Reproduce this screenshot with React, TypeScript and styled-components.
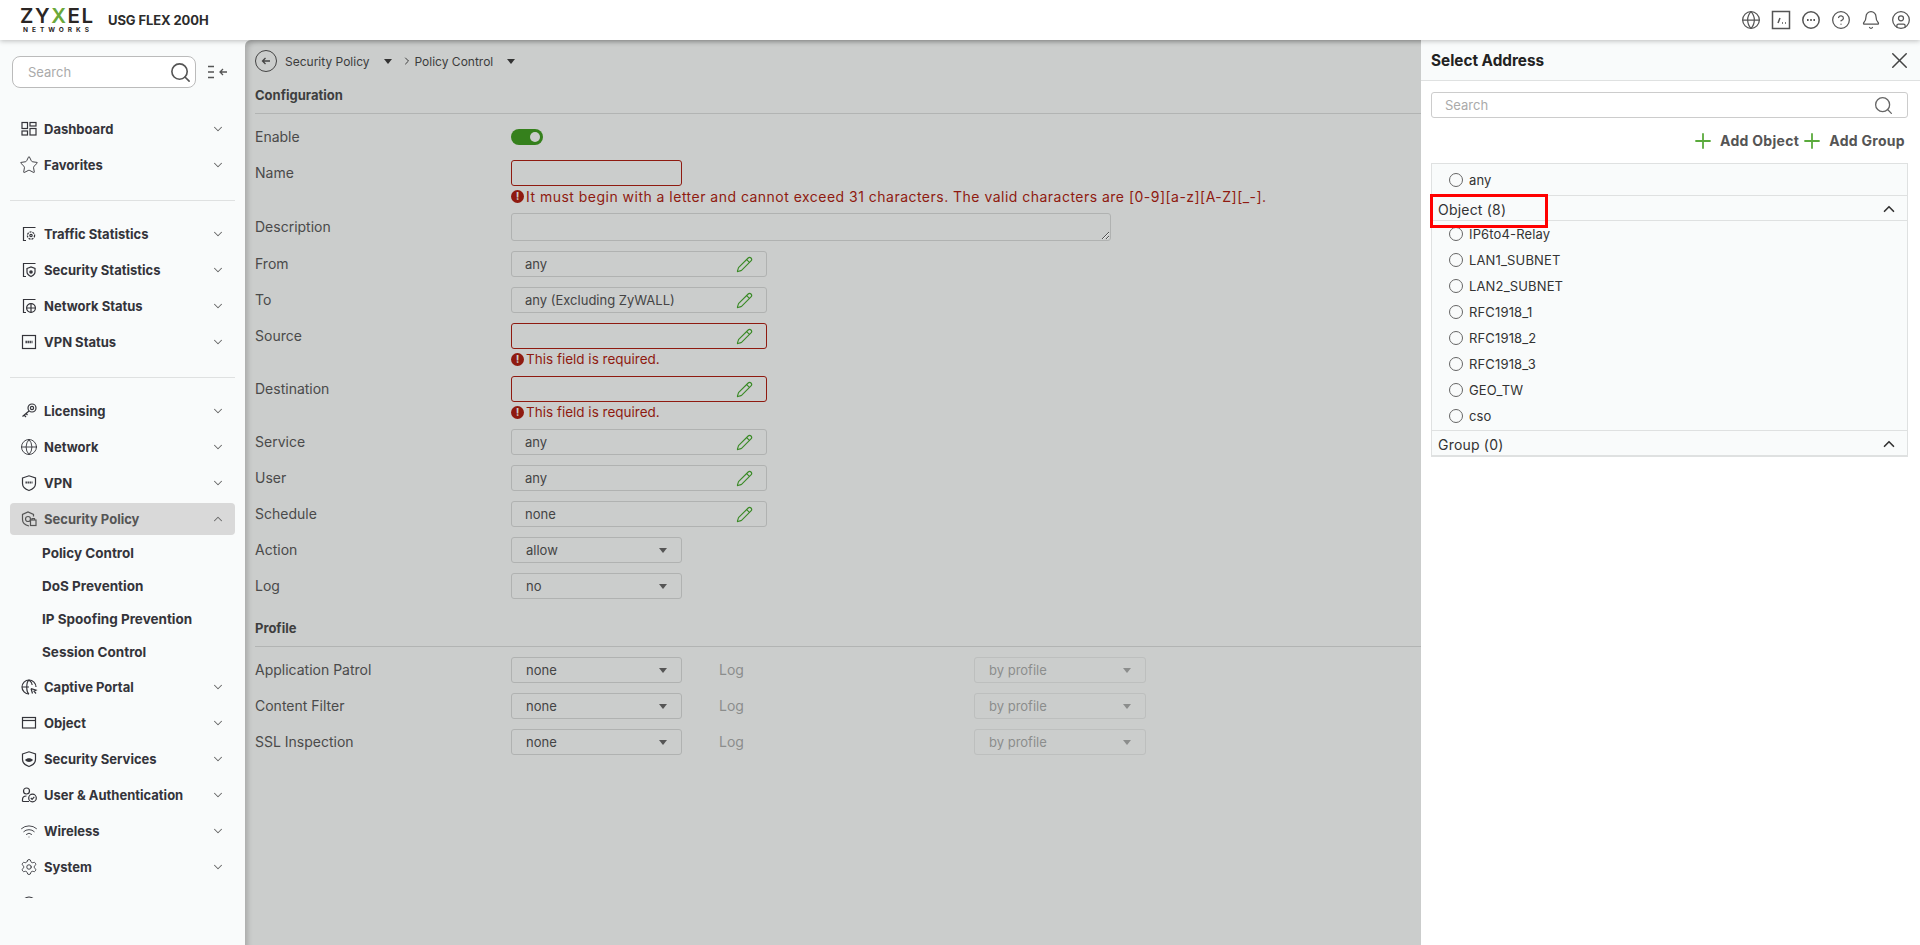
import React from 'react'
import styled, { createGlobalStyle } from 'styled-components'
import {
  Bell,
  ChevronDown,
  ChevronRight,
  ChevronUp,
  CircleHelp,
  CircleUser,
  Globe,
  Pencil,
  Plus,
  Search,
  Settings,
  Star,
  Wifi,
  X,
} from 'lucide-react'

const font = `'Inter', 'Liberation Sans', sans-serif`

const GlobalStyle = createGlobalStyle`
  html, body { margin: 0; height: 100%; }
  body { font-family: ${font}; color: #333; background: #f9fbfb; overflow: hidden; }
  * { box-sizing: border-box; }
`

const Page = styled.div`
  display: flex;
  flex-direction: column;
  height: 945px;
`

const TopBar = styled.header`
  display: flex;
  align-items: center;
  height: 40px;
  padding: 0 9px 0 20px;
  background: #fff;
  box-shadow: 0 1px 5px rgba(0, 0, 0, 0.25);
  position: relative;
  z-index: 2;
`

const Logo = styled.div`
  width: 88px;
  display: flex;
  flex-direction: column;
  color: #2b2624;
`

const LogoWord = styled.div`
  font-size: 20.5px;
  line-height: 20px;
  font-weight: 600;
  letter-spacing: 1.6px;
  height: 20px;
  span { color: #6aa83a; }
`

const LogoSub = styled.div`
  font-size: 6.5px;
  line-height: 8px;
  font-weight: 700;
  letter-spacing: 4px;
  padding-left: 3px;
`

const Model = styled.div`
  font-size: 13px;
  font-weight: 700;
  letter-spacing: -0.1px;
  color: #2c2c2c;
  flex: 1;
`

const TopIcons = styled.div`
  display: flex;
  align-items: center;
  gap: 10px;
  color: #555;
  svg { display: block; width: 20px; height: 20px; }
`

const Body = styled.div`
  flex: 1;
  display: flex;
  min-height: 0;
`

const Sidebar = styled.aside`
  width: 245px;
  flex-shrink: 0;
  display: flex;
  flex-direction: column;
  padding: 16px 10px 0;
  background: #f9fbfb;
`

const SearchRow = styled.div`
  display: flex;
  align-items: center;
  gap: 12px;
  margin: 0 0 25px 2px;
`

const SideSearch = styled.div`
  width: 184px;
  height: 32px;
  display: flex;
  align-items: center;
  justify-content: space-between;
  padding: 0 3px 0 15px;
  border: 1px solid #bbb;
  border-radius: 8px;
  background: #fff;
  font-size: 13px;
  color: #aaa;
  svg { color: #555; }
`

const Nav = styled.nav`
  height: 785px;
  overflow: hidden;
  display: flex;
  flex-direction: column;
`

const NavRow = styled.div<{ $active?: boolean }>`
  flex-shrink: 0;
  height: 32px;
  margin-bottom: 4px;
  display: flex;
  align-items: center;
  gap: 6px;
  padding: 0 10px 0 10px;
  border-radius: 4px;
  font-size: 13px;
  font-weight: 700;
  color: ${(p) => (p.$active ? '#555' : '#34343a')};
  background: ${(p) => (p.$active ? '#d9d9d9' : 'transparent')};
`

const IconSlot = styled.span`
  width: 18px;
  height: 20px;
  display: flex;
  align-items: center;
  justify-content: center;
  svg { flex-shrink: 0; }
`

const NavLabel = styled.span`
  flex: 1;
`

const NavChevron = styled.span`
  display: flex;
  color: #666;
`

const NavDivider = styled.hr`
  flex-shrink: 0;
  width: 100%;
  margin: 15px 0 17px;
  border: 0;
  border-top: 1px solid #dfe1e1;
`

const SubList = styled.div`
  flex-shrink: 0;
  margin: -2px 0 2px;
  display: flex;
  flex-direction: column;
`

const SubItem = styled.div`
  height: 33px;
  line-height: 33px;
  padding-left: 32px;
  font-size: 13.5px;
  font-weight: 700;
  color: #34343a;
`

const Main = styled.main`
  flex: 1;
  min-width: 0;
  padding: 10px 0 0 10px;
  background: #cbcdcc;
  border-top-left-radius: 6px;
  box-shadow: inset 5px 4px 5px -2px rgba(0, 0, 0, 0.16);
  color: #444;
  font-size: 13px;
`

const Crumbs = styled.div`
  display: flex;
  align-items: center;
  height: 22px;
  font-size: 12px;
  color: #3c3c3c;
`

const BackCircle = styled.span`
  width: 22px;
  height: 22px;
  border: 1px solid #444;
  border-radius: 50%;
  display: flex;
  align-items: center;
  justify-content: center;
  margin-right: 8px;
`

const CrumbArrow = styled.span`
  display: flex;
  margin: 0 2px 0 9px;
`

const Caret = styled.span<{ $color?: string; $left?: number }>`
  width: 0;
  height: 0;
  margin-left: ${(p) => p.$left ?? 0}px;
  border-left: 4px solid transparent;
  border-right: 4px solid transparent;
  border-top: 5px solid ${(p) => p.$color ?? '#333'};
`

const SectionHead = styled.div<{ $top: number }>`
  margin: ${(p) => p.$top}px 0 10px;
  height: 30px;
  line-height: 23px;
  padding-bottom: 5px;
  border-bottom: 1px solid #b2b4b3;
  font-weight: 700;
  font-size: 13px;
  color: #3e3e3e;
`

const FormRow = styled.div`
  display: grid;
  grid-template-columns: 256px 1fr;
  margin-bottom: 10px;
`

const Label = styled.div<{ $disabled?: boolean; $tall?: boolean }>`
  line-height: ${(p) => (p.$tall ? 28 : 26)}px;
  font-size: 14px;
  color: ${(p) => (p.$disabled ? '#8b8d8c' : '#4a4a4a')};
`

const Toggle = styled.span`
  display: block;
  width: 32px;
  height: 16px;
  margin: 5px 0;
  border-radius: 8px;
  background: #35801c;
  position: relative;
  &::after {
    content: '';
    position: absolute;
    right: 3px;
    top: 3px;
    width: 10px;
    height: 10px;
    border-radius: 50%;
    background: #cbcdcc;
  }
`

const NameInput = styled.input`
  display: block;
  width: 171px;
  height: 26px;
  background: transparent;
  border: 1px solid #8f1a10;
  border-radius: 3px;
  outline: none;
`

const DescArea = styled.textarea`
  display: block;
  width: 600px;
  height: 28px;
  background: transparent;
  border: 1px solid #b0b2b1;
  border-radius: 3px;
  outline: none;
  resize: vertical;
`

const PickField = styled.div<{ $error?: boolean }>`
  width: 256px;
  height: 26px;
  display: flex;
  align-items: center;
  justify-content: space-between;
  padding: 0 13px;
  border: 1px solid ${(p) => (p.$error ? '#8f1a10' : '#b0b2b1')};
  border-radius: 3px;
  color: #444;
  svg { color: #3a8a26; }
`

const ErrorLine = styled.div<{ $long?: boolean }>`
  height: 17px;
  padding-top: 3px;
  display: flex;
  align-items: center;
  gap: 2px;
  font-size: ${(p) => (p.$long ? 14 : 13.5)}px;
  letter-spacing: ${(p) => (p.$long ? 0.48 : 0)}px;
  color: #8f1a10;
  white-space: nowrap;
`

const ErrorDot = styled.span`
  width: 13px;
  height: 13px;
  border-radius: 50%;
  background: #8f1a10;
  color: #cbcdcc;
  font-size: 11px;
  line-height: 13px;
  letter-spacing: 0;
  font-weight: 700;
  text-align: center;
  flex-shrink: 0;
`

const SelectBox = styled.div<{ $disabled?: boolean }>`
  width: ${(p) => (p.$disabled ? 172 : 171)}px;
  height: 26px;
  display: flex;
  align-items: center;
  justify-content: space-between;
  padding: 0 14px;
  border: 1px solid ${(p) => (p.$disabled ? '#bdbfbe' : '#b0b2b1')};
  border-radius: 3px;
  color: ${(p) => (p.$disabled ? '#8b8d8c' : '#444')};
`

const ProfileRow = styled.div`
  display: grid;
  grid-template-columns: 256px 208px 255px 172px;
  margin-bottom: 10px;
`

const Drawer = styled.section`
  width: 499px;
  flex-shrink: 0;
  display: flex;
  flex-direction: column;
  background: #fff;
`

const DrawerHead = styled.div`
  height: 41px;
  flex-shrink: 0;
  display: flex;
  align-items: center;
  justify-content: space-between;
  padding: 1px 7px 0 10px;
  background: #f9fbfb;
  border-bottom: 1px solid #dfe1e1;
  font-size: 15.3px;
  font-weight: 700;
  color: #222;
  svg { color: #444; }
`

const DrawerSearch = styled.div`
  height: 26px;
  margin: 11px 12px 0 10px;
  display: flex;
  align-items: center;
  justify-content: space-between;
  padding: 0 13px;
  border: 1px solid #ccc;
  border-radius: 3px;
  font-size: 13px;
  color: #aaa;
  svg { color: #666; }
`

const AddBar = styled.div`
  display: flex;
  justify-content: flex-end;
  align-items: center;
  height: 45px;
  padding-right: 15px;
  font-size: 14px;
  letter-spacing: 0.3px;
  font-weight: 700;
  color: #555;
`

const AddLink = styled.span`
  display: flex;
  align-items: center;
  gap: 5px;
  margin-left: 1px;
  svg { color: #5aaa3c; }
`

const ListBox = styled.div`
  margin: 0 12px 0 10px;
  border: 1px solid #dfe1e1;
  border-bottom-width: 2px;
  background: #f9fbfb;
  font-size: 13px;
  letter-spacing: 0.15px;
  color: #333;
`

const RadioRow = styled.div<{ $height: number }>`
  height: ${(p) => p.$height}px;
  display: flex;
  align-items: center;
  gap: 6px;
  padding-left: 17px;
`

const Radio = styled.span`
  width: 14px;
  height: 14px;
  border: 1.5px solid #666;
  border-radius: 50%;
  flex-shrink: 0;
`

const GroupHead = styled.div`
  position: relative;
  height: 25px;
  display: flex;
  align-items: center;
  justify-content: space-between;
  padding: 2px 9px 0 6px;
  border-top: 1px solid #dfe1e1;
  font-size: 14px;
  letter-spacing: 0.2px;
  svg { color: #333; }
`

const GroupItems = styled.div`
  border-top: 1px solid #dfe1e1;
  height: 210px;
  overflow: hidden;
`

const Marker = styled.span`
  position: absolute;
  left: -2px;
  top: -2px;
  width: 118px;
  height: 34px;
  border: 3px solid #f00;
  z-index: 1;
`

const icon = {
  width: 18,
  height: 18,
  viewBox: '0 0 18 18',
  fill: 'none',
  stroke: 'currentColor',
  strokeWidth: 1.2,
}

const Tiles = () => (
  <svg {...icon}>
    <rect x="2" y="2.5" width="5.5" height="6" />
    <rect x="10" y="2.5" width="6" height="3.5" />
    <rect x="2" y="11" width="5.5" height="4" />
    <rect x="10" y="8.5" width="6" height="6.5" />
  </svg>
)

const StatFrame: React.FC<{ children: React.ReactNode }> = ({ children }) => (
  <svg {...icon}>
    <path d="M15.5 2.5H3.5v13H6" />
    {children}
  </svg>
)

const Gear = () => (
  <StatFrame>
    <circle cx="11" cy="10.5" r="3.6" strokeDasharray="2 1" />
    <circle cx="11" cy="10.5" r="1.2" />
  </StatFrame>
)

const ShieldStat = () => (
  <StatFrame>
    <path d="M7 7.5l4-1.5 4 1.5v3.5c0 2-2 3.5-4 4.5-2-1-4-2.5-4-4.5z" />
    <circle cx="11" cy="11" r="1.8" fill="currentColor" stroke="none" />
  </StatFrame>
)

const GlobeStat = () => (
  <StatFrame>
    <circle cx="11" cy="11" r="4.4" />
    <path d="M6.6 11h8.8M11 6.6v8.8" />
  </StatFrame>
)

const VpnBox = () => (
  <svg {...icon}>
    <rect x="2.5" y="2.5" width="13" height="13" />
    <path d="M5.5 9h7" strokeWidth="2.4" strokeDasharray="1.4 .6" />
  </svg>
)

const KeyBadge = () => (
  <svg {...icon}>
    <circle cx="12" cy="6" r="4" />
    <circle cx="12" cy="6" r="1.6" />
    <path d="M9 9l-6.5 5.5M4 13l2 2M6 11.5l1.5 1.5" />
  </svg>
)

const ShieldVpn = () => (
  <svg {...icon}>
    <path d="M2.5 4L9 1.8 15.5 4v5.5c0 3.4-3 5.8-6.5 7-3.5-1.2-6.5-3.6-6.5-7z" />
    <path d="M5.5 8.5h7" strokeWidth="2" strokeDasharray="1.4 .6" />
  </svg>
)

const ShieldLock = () => (
  <svg {...icon}>
    <path d="M9 16C5 15 2.5 12.5 2.5 9.5V4.5L8 2l5.5 2.500v2" />
    <circle cx="8" cy="9" r="2.5" />
    <rect x="10.5" y="10" width="5.5" height="5.5" />
    <path d="M12 10V8.5h2.500V10" />
  </svg>
)

const GlobeCursor = () => (
  <svg {...icon}>
    <path d="M9 16A7 7 0 1 1 16 9" />
    <path d="M2 9h7M9 2c-3 2-3 12 0 14M9 2c2 1.500 3 3.500 3.200 5" />
    <path d="M11 10.500l5 1.700-2 1 2 2.300M11 10.500l1.500 5" />
  </svg>
)

const Card = () => (
  <svg {...icon}>
    <rect x="2.5" y="3.5" width="13" height="10.5" />
    <path d="M2.5 6.5h13" />
  </svg>
)

const ShieldEye = () => (
  <svg {...icon}>
    <path d="M2.5 4L9 1.800 15.500 4v5.500c0 3.400-3 5.800-6.500 7-3.500-1.200-6.500-3.600-6.500-7z" />
    <path d="M5 10c2-2.500 6-2.500 8 0-2 2.500-6 2.500-8 0z" fill="currentColor" stroke="none" />
  </svg>
)

const UserCheck = () => (
  <svg {...icon}>
    <circle cx="6.5" cy="5" r="3" />
    <path d="M2.5 15.500v-2c0-2 1.500-3.500 4-3.500M2.500 15.500H9" />
    <circle cx="12.5" cy="12" r="3.8" />
    <path d="M10.800 12l1.300 1.300 2.200-2.400" />
  </svg>
)

const LogBadge = () => (
  <svg {...icon}>
    <path d="M3 9c0-8 12-8 12 0v7H3z" />
  </svg>
)

const Collapse = () => (
  <svg width="20" height="14" viewBox="0 0 20 14" fill="none" stroke="#555" strokeWidth="1.3">
    <path d="M0 1.500h6M0 7h6M0 12.500h6" />
    <path d="M19 7h-7M15 4l-3 3 3 3" />
  </svg>
)

const Analytics = () => (
  <svg viewBox="0 0 20 20" fill="none" stroke="currentColor" strokeWidth="1.5">
    <rect x="1.5" y="1.5" width="17" height="17" />
    <path d="M7 13l2-5M11 13h1M14 13h1" />
  </svg>
)

const Ellipsis = () => (
  <svg viewBox="0 0 20 20" fill="none" stroke="currentColor" strokeWidth="1.5">
    <circle cx="10" cy="10" r="8.2" />
    <path d="M6 10h1.600M9.200 10h1.600M12.400 10h1.600" strokeWidth="1.800" />
  </svg>
)

const Chevron: React.FC<{ up?: boolean }> = ({ up }) =>
  up ? <ChevronUp size={14} strokeWidth={1.8} /> : <ChevronDown size={14} strokeWidth={1.8} />

const groupA = [
  { label: 'Dashboard', icon: <Tiles /> },
  { label: 'Favorites', icon: <Star size={20} strokeWidth={1.1} /> },
]
const groupB = [
  { label: 'Traffic Statistics', icon: <Gear /> },
  { label: 'Security Statistics', icon: <ShieldStat /> },
  { label: 'Network Status', icon: <GlobeStat /> },
  { label: 'VPN Status', icon: <VpnBox /> },
]
const groupC = [
  { label: 'Licensing', icon: <KeyBadge /> },
  { label: 'Network', icon: <Globe size={18} strokeWidth={1.2} /> },
  { label: 'VPN', icon: <ShieldVpn /> },
]
const groupD = [
  { label: 'Captive Portal', icon: <GlobeCursor /> },
  { label: 'Object', icon: <Card /> },
  { label: 'Security Services', icon: <ShieldEye /> },
  { label: 'User & Authentication', icon: <UserCheck /> },
  { label: 'Wireless', icon: <Wifi size={18} strokeWidth={1.2} /> },
  { label: 'System', icon: <Settings size={18} strokeWidth={1.2} /> },
  { label: 'Log & Report', icon: <LogBadge /> },
]

const subItems = ['Policy Control', 'DoS Prevention', 'IP Spoofing Prevention', 'Session Control']
const objects = ['IP6to4-Relay', 'LAN1_SUBNET', 'LAN2_SUBNET', 'RFC1918_1', 'RFC1918_2', 'RFC1918_3', 'GEO_TW', 'cso']

const NavItem: React.FC<{ label: string; icon: React.ReactNode; active?: boolean }> = ({ label, icon: glyph, active }) => (
  <NavRow $active={active}>
    <IconSlot>{glyph}</IconSlot>
    <NavLabel>{label}</NavLabel>
    <NavChevron>
      <Chevron up={active} />
    </NavChevron>
  </NavRow>
)

const Pick: React.FC<{ label: string; value?: string; error?: boolean }> = ({ label, value, error }) => (
  <FormRow>
    <Label>{label}</Label>
    <div>
      <PickField $error={error}>
        <span>{value}</span>
        <Pencil size={17} strokeWidth={1.6} />
      </PickField>
      {error && (
        <ErrorLine>
          <ErrorDot>!</ErrorDot>This field is required.
        </ErrorLine>
      )}
    </div>
  </FormRow>
)

const Select: React.FC<{ value: string; disabled?: boolean }> = ({ value, disabled }) => (
  <SelectBox $disabled={disabled}>
    <span>{value}</span>
    <Caret $color={disabled ? '#8b8d8c' : '#555'} />
  </SelectBox>
)

const App: React.FC = () => (
  <Page>
    <GlobalStyle />
    <TopBar>
      <Logo>
        <LogoWord>
          ZY<span>X</span>EL
        </LogoWord>
        <LogoSub>NETWORKS</LogoSub>
      </Logo>
      <Model>USG FLEX 200H</Model>
      <TopIcons>
        <Globe strokeWidth={1.5} />
        <Analytics />
        <Ellipsis />
        <CircleHelp strokeWidth={1.5} />
        <Bell strokeWidth={1.5} />
        <CircleUser strokeWidth={1.5} />
      </TopIcons>
    </TopBar>
    <Body>
      <Sidebar>
        <SearchRow>
          <SideSearch>
            Search
            <Search size={23} strokeWidth={1.7} />
          </SideSearch>
          <Collapse />
        </SearchRow>
        <Nav>
          {groupA.map((g) => (
            <NavItem key={g.label} {...g} />
          ))}
          <NavDivider />
          {groupB.map((g) => (
            <NavItem key={g.label} {...g} />
          ))}
          <NavDivider />
          {groupC.map((g) => (
            <NavItem key={g.label} {...g} />
          ))}
          <NavItem label="Security Policy" icon={<ShieldLock />} active />
          <SubList>
            {subItems.map((s) => (
              <SubItem key={s}>{s}</SubItem>
            ))}
          </SubList>
          {groupD.map((g) => (
            <NavItem key={g.label} {...g} />
          ))}
        </Nav>
      </Sidebar>
      <Main>
        <Crumbs>
          <BackCircle>
            <svg width="12" height="12" viewBox="0 0 12 12" fill="none" stroke="#444" strokeWidth="1.3">
              <path d="M10 6H2.500M5.500 3L2.500 6l3 3" />
            </svg>
          </BackCircle>
          Security Policy
          <Caret $left={14} />
          <CrumbArrow>
            <ChevronRight size={12} />
          </CrumbArrow>
          Policy Control
          <Caret $left={14} />
        </Crumbs>
        <SectionHead $top={12}>Configuration</SectionHead>
        <FormRow>
          <Label>Enable</Label>
          <Toggle />
        </FormRow>
        <FormRow>
          <Label>Name</Label>
          <div>
            <NameInput />
            <ErrorLine $long>
              <ErrorDot>!</ErrorDot>It must begin with a letter and cannot exceed 31 characters. The valid characters
              are [0-9][a-z][A-Z][_-].
            </ErrorLine>
          </div>
        </FormRow>
        <FormRow>
          <Label $tall>Description</Label>
          <DescArea />
        </FormRow>
        <Pick label="From" value="any" />
        <Pick label="To" value="any (Excluding ZyWALL)" />
        <Pick label="Source" error />
        <Pick label="Destination" error />
        <Pick label="Service" value="any" />
        <Pick label="User" value="any" />
        <Pick label="Schedule" value="none" />
        <FormRow>
          <Label>Action</Label>
          <Select value="allow" />
        </FormRow>
        <FormRow>
          <Label>Log</Label>
          <Select value="no" />
        </FormRow>
        <SectionHead $top={18}>Profile</SectionHead>
        {['Application Patrol', 'Content Filter', 'SSL Inspection'].map((name) => (
          <ProfileRow key={name}>
            <Label>{name}</Label>
            <Select value="none" />
            <Label $disabled>Log</Label>
            <Select value="by profile" disabled />
          </ProfileRow>
        ))}
      </Main>
      <Drawer>
        <DrawerHead>
          Select Address
          <X size={27} strokeWidth={1.3} />
        </DrawerHead>
        <DrawerSearch>
          Search
          <Search size={21} strokeWidth={1.5} />
        </DrawerSearch>
        <AddBar>
          <AddLink>
            <Plus size={24} strokeWidth={1.8} />
            Add Object
          </AddLink>
          <AddLink>
            <Plus size={24} strokeWidth={1.8} />
            Add Group
          </AddLink>
        </AddBar>
        <ListBox>
          <RadioRow $height={31}>
            <Radio />
            any
          </RadioRow>
          <GroupHead>
            <Marker />
            Object (8)
            <ChevronUp size={18} strokeWidth={2.2} />
          </GroupHead>
          <GroupItems>
            {objects.map((o) => (
              <RadioRow key={o} $height={26}>
                <Radio />
                {o}
              </RadioRow>
            ))}
          </GroupItems>
          <GroupHead>
            Group (0)
            <ChevronUp size={18} strokeWidth={2.2} />
          </GroupHead>
        </ListBox>
      </Drawer>
    </Body>
  </Page>
)

export default App
